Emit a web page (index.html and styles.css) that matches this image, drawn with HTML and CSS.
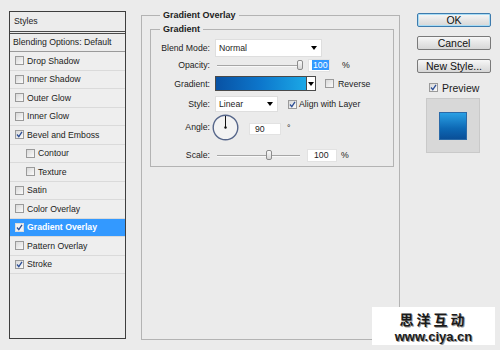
FILE: index.html
```html
<!DOCTYPE html>
<html lang="en">
<head>
    <meta charset="UTF-8">
    <title>Layer Style - Gradient Overlay</title>
    <link rel="stylesheet" href="styles.css">
</head>
<body>
    <div class="dialog">
        <!-- Styles list -->
        <div class="styles-panel">
            <div class="panel-head">Styles</div>
            <div class="panel-blend">Blending Options: Default</div>
            <ul class="effects">
                <li class="effect"><span class="check"></span>Drop Shadow</li>
                <li class="effect"><span class="check"></span>Inner Shadow</li>
                <li class="effect"><span class="check"></span>Outer Glow</li>
                <li class="effect"><span class="check"></span>Inner Glow</li>
                <li class="effect"><span class="check"><svg viewBox="0 0 7 7"><polyline points="1,3.5 2.8,5.6 6,0.8"/></svg></span>Bevel and Emboss</li>
                <li class="effect sub"><span class="check"></span>Contour</li>
                <li class="effect sub"><span class="check"></span>Texture</li>
                <li class="effect"><span class="check"></span>Satin</li>
                <li class="effect"><span class="check"></span>Color Overlay</li>
                <li class="effect active"><span class="check"><svg viewBox="0 0 7 7"><polyline points="1,3.5 2.8,5.6 6,0.8"/></svg></span>Gradient Overlay</li>
                <li class="effect"><span class="check"></span>Pattern Overlay</li>
                <li class="effect"><span class="check"><svg viewBox="0 0 7 7"><polyline points="1,3.5 2.8,5.6 6,0.8"/></svg></span>Stroke</li>
            </ul>
        </div>

        <!-- Options -->
        <fieldset class="group outer">
            <legend>Gradient Overlay</legend>
            <fieldset class="group inner">
                <legend>Gradient</legend>

                <div class="row row-blend">
                    <span class="lbl">Blend Mode:</span>
                    <div class="select select-blend">Normal<i class="arrow"></i></div>
                </div>

                <div class="row row-opacity">
                    <span class="lbl">Opacity:</span>
                    <div class="slider"><span class="track"></span><span class="thumb" style="left: 82px"></span></div>
                    <div class="field field-opacity"><span class="selected">100</span></div>
                    <span class="unit unit-opacity">%</span>
                </div>

                <div class="row row-gradient">
                    <span class="lbl">Gradient:</span>
                    <div class="gradient-bar"></div>
                    <div class="gradient-arrow"><i class="arrow"></i></div>
                    <span class="check check-reverse"></span>
                    <span class="check-label">Reverse</span>
                </div>

                <div class="row row-style">
                    <span class="lbl">Style:</span>
                    <div class="select select-style">Linear<i class="arrow"></i></div>
                    <span class="check check-align"><svg viewBox="0 0 7 7"><polyline points="1,3.5 2.8,5.6 6,0.8"/></svg></span>
                    <span class="check-label align-label">Align with Layer</span>
                </div>

                <div class="row row-angle">
                    <span class="lbl">Angle:</span>
                    <svg class="dial" width="27" height="27" viewBox="0 0 27 27">
                        <circle cx="13.5" cy="13.5" r="12.3" fill="#f3f3f3" stroke="#56668a" stroke-width="1.4"/>
                        <line x1="13.5" y1="13.5" x2="13.5" y2="2" stroke="#111" stroke-width="1"/>
                        <circle cx="13.5" cy="13.5" r="1.2" fill="#111"/>
                    </svg>
                    <div class="field field-angle">90</div>
                    <span class="unit unit-degree">&deg;</span>
                </div>

                <div class="row row-scale">
                    <span class="lbl">Scale:</span>
                    <div class="slider"><span class="track"></span><span class="thumb" style="left: 51px"></span></div>
                    <div class="field field-scale">100</div>
                    <span class="unit unit-scale">%</span>
                </div>
            </fieldset>
        </fieldset>

        <!-- Buttons and preview -->
        <div class="side">
            <button class="btn btn-default">OK</button>
            <button class="btn">Cancel</button>
            <button class="btn">New Style...</button>
            <div class="preview-toggle">
                <span class="check"><svg viewBox="0 0 7 7"><polyline points="1,3.5 2.8,5.6 6,0.8"/></svg></span>
                <span>Preview</span>
            </div>
            <div class="preview-box">
                <div class="preview-swatch"></div>
            </div>
        </div>
    </div>

    <div class="watermark">
        <div class="wm-title">思洋互动</div>
        <div class="wm-url">www.ciya.cn</div>
    </div>
</body>
</html>
```

FILE: styles.css
```css
body {
    margin: 0;
    width: 500px;
    height: 350px;
    overflow: hidden;
    background-color: #ebebeb;
    font-family: "Liberation Sans", Arial, sans-serif;
    font-size: 8.7px;
    color: #1c1c1c;
    position: relative;
}
.dialog {
    display: flex;
    align-items: flex-start;
}

/* styles list */
.styles-panel {
    margin: 11px 0 0 9px;
    width: 117px;
    height: 328px;
    box-sizing: border-box;
    border: 1px solid #3e3e3e;
    background-color: #ececec;
}
.panel-head {
    height: 19px;
    line-height: 19px;
    padding-left: 4px;
    border-bottom: 3px double #4a4a4a;
}
.panel-blend {
    height: 17px;
    line-height: 17px;
    padding-left: 3px;
    border-bottom: 1px solid #9a9a9a;
}
.effects {
    list-style: none;
    margin: 0;
    padding: 0;
}
.effect {
    height: 17.5px;
    display: flex;
    align-items: center;
    padding-left: 5px;
    border-bottom: 1px solid #dadada;
    background-color: #eeeeee;
}
.effect.sub {
    padding-left: 16px;
}
.effect.active {
    background-color: #3399ff;
    color: #ffffff;
    font-weight: bold;
}
.check {
    width: 9px;
    height: 9px;
    box-sizing: border-box;
    border: 1px solid #9a9a9a;
    background: linear-gradient(135deg, #d8d8d8, #fbfbfb);
    display: inline-flex;
    align-items: center;
    justify-content: center;
    flex: none;
}
.check svg {
    width: 7px;
    height: 7px;
    fill: none;
    stroke: #2d4f96;
    stroke-width: 1.3;
}
.effect .check {
    margin-right: 3px;
}
.effect.active .check {
    background: #f4f4f4;
    border-color: #dddddd;
}

/* option groups */
.group {
    margin: 0;
    padding: 0;
    border: 1px solid #b3b3b3;
    min-width: 0;
    box-sizing: border-box;
}
.group legend {
    font-weight: bold;
    font-size: 9px;
    line-height: 12px;
    padding: 0 3px;
    color: #222;
}
.outer {
    margin: 9px 0 0 15px;
    width: 259px;
    height: 331px;
    padding-left: 8px;
}
.outer > legend {
    margin-left: 10px;
}
.inner {
    margin-top: 2px;
    width: 244px;
    padding-bottom: 4px;
}
.inner > legend {
    margin-left: 9px;
}
.row {
    display: flex;
    align-items: center;
}
.lbl {
    width: 59px;
    margin-right: 5px;
    text-align: right;
    flex: none;
}
.row-blend { margin-top: 4px; height: 18px; }
.row-opacity { margin-top: 1px; height: 14px; }
.row-gradient { margin-top: 4px; height: 15px; }
.row-style { margin-top: 5px; height: 16px; }
.row-angle { margin-top: 2px; height: 26px; }
.row-scale { margin-top: 8px; height: 14px; }

.select {
    position: relative;
    height: 100%;
    box-sizing: border-box;
    background-color: #ffffff;
    border: 1px solid #dedede;
    padding-left: 3px;
    display: flex;
    align-items: center;
}
.select-blend { width: 107px; }
.select-style { width: 63px; }
.arrow {
    position: absolute;
    right: 4px;
    top: 50%;
    margin-top: -2px;
    width: 0;
    height: 0;
    border-left: 3.5px solid transparent;
    border-right: 3.5px solid transparent;
    border-top: 4px solid #000;
}

.slider {
    position: relative;
    width: 90px;
    height: 100%;
    flex: none;
}
.track {
    position: absolute;
    left: 2px;
    right: 5px;
    top: 50%;
    border-top: 1px solid #a6a6a6;
    border-bottom: 1px solid #f8f8f8;
}
.thumb {
    position: absolute;
    top: 50%;
    margin-top: -5px;
    width: 6px;
    height: 10px;
    box-sizing: border-box;
    border: 1px solid #8c8c8c;
    border-radius: 2px;
    background: linear-gradient(#fafafa, #d6d6d6);
}

.field {
    height: 13px;
    box-sizing: border-box;
    background-color: #ffffff;
    border: 1px solid #e2e2e2;
    display: flex;
    align-items: center;
    padding-left: 5px;
}
.field-opacity { width: 22px; margin-left: 3px; padding-left: 3px; }
.field-angle { width: 32px; height: 12px; margin-left: 10px; margin-top: 4px; }
.field-scale { width: 30px; margin-left: 2px; padding-left: 6px; }
.selected {
    background-color: #3399ff;
    color: #ffffff;
    padding: 0 1px;
    line-height: 10px;
}
.unit-opacity { margin-left: 12px; }
.unit-scale { margin-left: 4px; }
.unit-degree { margin-left: 6px; align-self: flex-start; margin-top: 9px; line-height: 10px; }

.gradient-bar {
    width: 92px;
    height: 100%;
    box-sizing: border-box;
    border: 1px solid #4a4a4a;
    background: linear-gradient(90deg, #0852a4, #0d77cc 50%, #1ba8e6);
}
.gradient-arrow {
    position: relative;
    width: 9px;
    height: 100%;
    box-sizing: border-box;
    border: 1px solid #4a4a4a;
    border-left: none;
    background-color: #ffffff;
}
.gradient-arrow .arrow {
    right: 1px;
    border-left-width: 3px;
    border-right-width: 3px;
}
.check-reverse { margin-left: 9px; }
.check-label { margin-left: 4px; }
.check-align { margin-left: 10px; }
.align-label { margin-left: 2px; }
.dial {
    margin-left: -3px;
    flex: none;
}

/* buttons and preview */
.side {
    margin: 13px 0 0 17px;
    width: 74px;
    display: flex;
    flex-direction: column;
}
.btn {
    height: 14px;
    padding: 0;
    margin: 0 0 9px 0;
    font-family: "Liberation Sans", Arial, sans-serif;
    font-size: 10.5px;
    line-height: 12px;
    color: #111;
    border: 1px solid #7a7a7a;
    border-radius: 2px;
    background: linear-gradient(#f7f7f7, #e6e6e6 50%, #d7d7d7);
}
.btn-default {
    border-color: #3d7bad;
    box-shadow: inset 0 0 0 1px #a8dcf5;
}
.preview-toggle {
    display: flex;
    align-items: center;
    margin: 1px 0 0 12px;
    height: 9px;
    font-size: 10.5px;
}
.preview-toggle .check {
    margin-right: 4px;
}
.preview-box {
    margin: 6px 0 0 9px;
    width: 54px;
    height: 55px;
    box-sizing: border-box;
    border: 1px solid #c9c9c9;
    background-color: #d8d8d8;
    display: flex;
    align-items: center;
    justify-content: center;
}
.preview-swatch {
    width: 28px;
    height: 28px;
    box-sizing: border-box;
    border: 1px solid #2a6aa8;
    background: linear-gradient(#2aa0e4, #0d68b4 60%, #0a4f98);
}

/* watermark sits over the dialog */
.watermark {
    position: absolute;
    left: 372px;
    top: 307px;
    width: 123px;
    height: 38px;
    background-color: #ffffff;
    text-align: center;
    color: #1a1a1a;
    display: flex;
    flex-direction: column;
    align-items: center;
}
.wm-title {
    margin-top: 2px;
    font-family: "Noto Sans CJK SC", sans-serif;
    font-weight: bold;
    font-size: 14px;
    line-height: 20px;
    letter-spacing: 3px;
    text-shadow: 1px 1px 0 #9a9a9a;
}
.wm-url {
    font-family: "Liberation Sans", Arial, sans-serif;
    font-weight: bold;
    font-size: 13px;
    line-height: 15px;
    text-shadow: 1px 1px 0 #9a9a9a;
}
```
